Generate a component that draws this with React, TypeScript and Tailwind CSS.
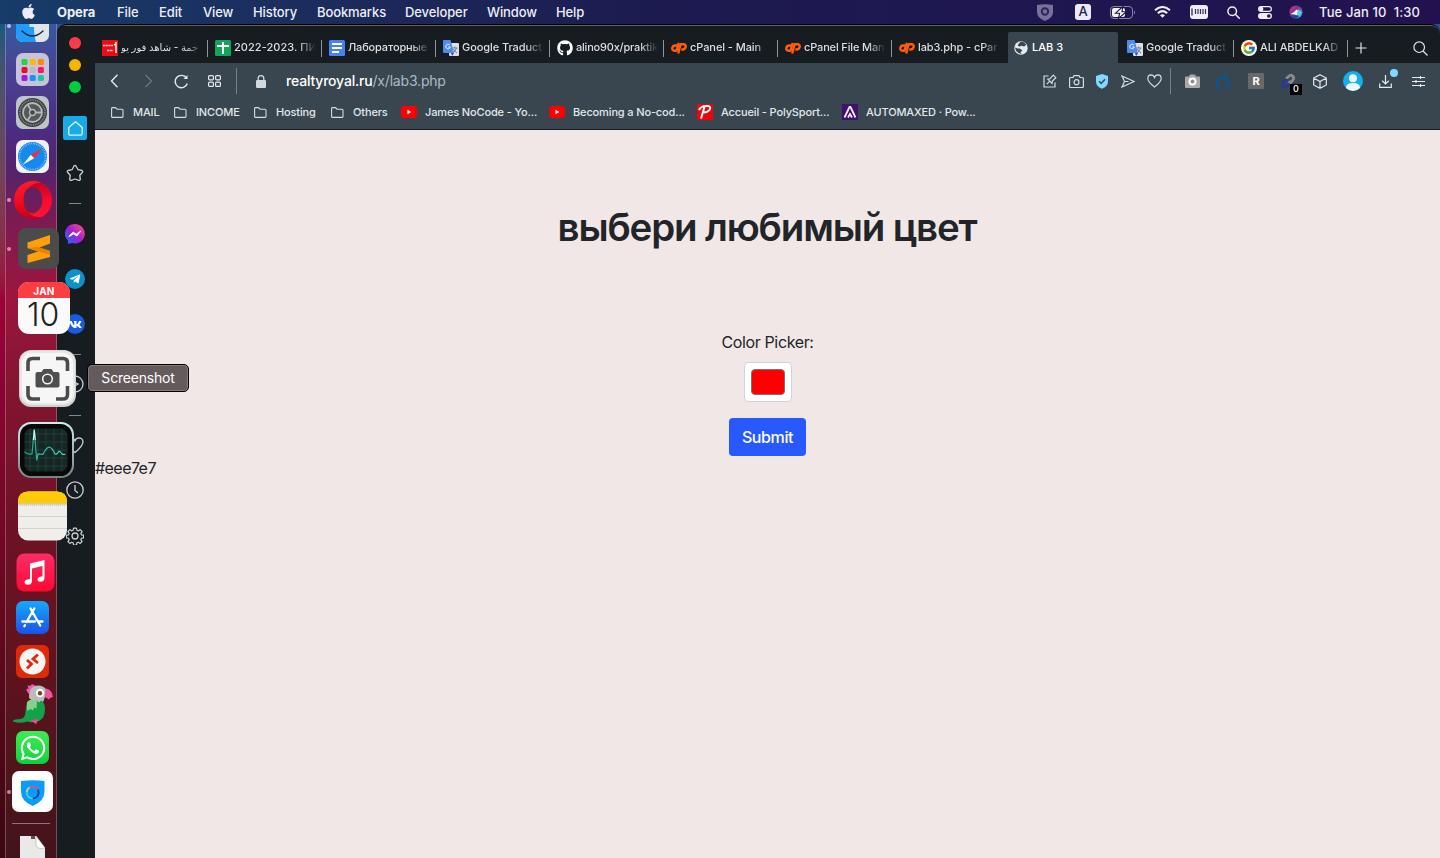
import React from "react";
import { FaApple, FaGithub, FaWhatsapp, FaTelegramPlane, FaVk } from "react-icons/fa";
import { FcGoogle } from "react-icons/fc";

const menus = [
  { label: "File", w: "w-[42px]" },
  { label: "Edit", w: "w-[44px]" },
  { label: "View", w: "w-[50px]" },
  { label: "History", w: "w-[64px]" },
  { label: "Bookmarks", w: "w-[88px]" },
  { label: "Developer", w: "w-[82px]" },
  { label: "Window", w: "w-[69px]" },
  { label: "Help", w: "w-[40px]" },
];

function MenuBar() {
  return (
    <div className="flex h-6 shrink-0 items-center bg-linear-to-r from-[#173c69] via-[#1c1b50] via-45% to-[#21124f] text-[13px] font-medium text-[#edeef5]">
      <FaApple className="mb-px ml-5 mr-[20px] size-[17px] shrink-0" />
      <span className="w-[60px] pt-[2px] font-bold tracking-[-0.05px]">Opera</span>
      {menus.map((m) => (
        <span key={m.label} className={`${m.w} shrink-0 pt-[2px] tracking-[-0.1px]`}>{m.label}</span>
      ))}
      <div className="ml-auto flex items-center">
        <span className="flex w-[38px] justify-center">
          <svg width="16" height="17" viewBox="0 0 16 17"><path d="M0 1Q8-.6 16 1v7q0 6-8 9-8-3-8-9z" fill="#77719c" /><circle cx="8" cy="7.500" r="3.200" fill="none" stroke="#30245d" strokeWidth="2" /></svg>
        </span>
        <span className="flex w-[38px] justify-center">
          <span className="flex size-4 items-center justify-center rounded-[3px] bg-[#eceaf3] text-[13px] font-medium text-[#2b2053]">A</span>
        </span>
        <span className="flex w-[41px] justify-center">
          <svg width="26" height="13" viewBox="0 0 26 13"><rect x=".5" y=".5" width="22" height="12" rx="3.500" fill="none" stroke="#8b85aa" /><path d="M24 4.500q2 2 0 4z" fill="#8b85aa" /><rect x="2" y="2" width="13" height="9" rx="2" fill="#f4f3f8" /><path d="M13 .5L5.500 7.200h4.200L8.300 12.500l8.200-6.700h-4.600z" fill="#fff" stroke="#21124f" strokeWidth="1.100" /></svg>
        </span>
        <span className="flex w-[38px] justify-center">
          <svg width="17" height="12" viewBox="0 0 17 12" fill="none" stroke="#f0eff6" strokeWidth="2"><path d="M1 4.300q7.500-6.600 15 0M3.800 7.200q4.700-4.200 9.400 0" /><path d="M8.500 11.800L6 9.300q2.500-2 5 0z" fill="#f0eff6" stroke="none" /></svg>
        </span>
        <span className="flex w-[36px] justify-center">
          <svg width="18" height="14" viewBox="0 0 18 14"><rect width="18" height="14" rx="3" fill="#f0eff6" /><path d="M2 3.500v7" stroke="#21124f" strokeWidth="1.200" /><path d="M5.500 4v5M8 4v5M10.500 4v5M13 4v5M15.500 4v5" stroke="#3a2e66" strokeWidth="1.200" /></svg>
        </span>
        <span className="flex w-[32px] justify-center">
          <svg width="13" height="13" viewBox="0 0 13 13" fill="none" stroke="#f0eff6" strokeWidth="1.500"><circle cx="5.200" cy="5.200" r="4.300" /><path d="M8.300 8.300l4 4" strokeLinecap="round" /></svg>
        </span>
        <span className="flex w-[32px] justify-center">
          <svg width="14" height="13" viewBox="0 0 14 13"><rect x=".6" y=".6" width="12.800" height="4.800" rx="2.400" fill="none" stroke="#f0eff6" strokeWidth="1.200" /><circle cx="3.200" cy="3" r="2.200" fill="#f0eff6" /><rect y="7" width="14" height="6" rx="3" fill="#f0eff6" /><circle cx="10.800" cy="10" r="1.800" fill="#21124f" /></svg>
        </span>
        <span className="flex w-[38px] justify-center pr-2">
          <svg width="14" height="14" viewBox="0 0 14 14"><defs><linearGradient id="siri" x1="0" y1="0" x2="1" y2="1"><stop offset="0" stopColor="#e0308e" /><stop offset=".4" stopColor="#8a2f96" /><stop offset="1" stopColor="#21a5e8" /></linearGradient></defs><circle cx="7" cy="7" r="6.600" fill="url(#siri)" /><path d="M1.500 9Q5 8 7.500 4.500 9 5 9.500 7L8 10.500 5.500 9.500z" fill="#f2fbff" /><path d="M9 4l4 3-2.500 5L8 9.500z" fill="#4ed3e0" /><path d="M2 10.500l4-.5 4 1-3 2.500q-3-.3-5-3z" fill="#27408f" /></svg>
        </span>
        <span className="w-[121px] whitespace-pre pt-[1px] tracking-[0.12px]">Tue Jan 10  1:30</span>
      </div>
    </div>
  );
}

function Translate() {
  return (
    <svg width="16" height="16" viewBox="0 0 16 16"><rect x="6" y="3" width="10" height="13" rx="1" fill="#dcdfe3" /><path d="M9 8h5.500M11.700 6.500V8M13.500 8q-1 3-3.500 5M10.500 9q1 2.500 3.500 4" stroke="#6a7f92" fill="none" /><path d="M8 13h3l-1.800 3z" fill="#3b3fc4" /><path d="M1 0h6.500L11 13H1q-1 0-1-1V1q0-1 1-1z" fill="#4e8af3" /><path d="M6.800 5a2.300 2.300 0 1 0 .5 2H5.200" fill="none" stroke="#eef" strokeWidth="1" /></svg>
  );
}

const CP = () => (
  <svg width="16" height="12" viewBox="0 0 16 12" fill="none" stroke="#ff5d0a" strokeWidth="2.400">
    <path d="M6.500 3.500H4.200Q1.800 3.500 1.300 6 1 8.700 3.600 8.700H5.500L7.800.8" strokeLinejoin="round" />
    <path d="M7.200 11.500L9.600 2.200h2.900q2.500.2 2.200 2.600-.5 2.700-3.200 2.700H10.300" strokeLinejoin="round" />
  </svg>
);

type TabInfo = { label: string; icon: React.ReactNode; rtl?: boolean; track?: string };
const tabsLeft: TabInfo[] = [
  { label: "جمة - شاهد فور يو", rtl: true, track: "text-[10px] leading-[16px] pb-px", icon: <svg width="16" height="16" viewBox="0 0 16 16"><rect width="16" height="16" fill="#ee0a17" /><path d="M1 5.500h10M5 10.500h6" stroke="#ffc9c9" strokeWidth="1.600" strokeDasharray="2.300 .4" /><path d="M14 4v9M12 5l2-1" stroke="#fff" strokeWidth="1.500" /><circle cx="14" cy="3" r="1.200" fill="#ffd83a" /></svg> },
  { label: "2022-2023. ПИ", icon: <svg width="16" height="16" viewBox="0 0 16 16"><rect width="16" height="16" rx="1.500" fill="#10a558" /><path d="M2 6h12M8 2v12" stroke="#fff" strokeWidth="2" /></svg>, track: "tracking-[0.05px]" },
  { label: "Лабораторные", track: "tracking-[-0.15px]", icon: <svg width="16" height="16" viewBox="0 0 16 16"><rect width="16" height="16" rx="1.500" fill="#4a80f5" /><path d="M3 4h10M3 8h10M3 12h7" stroke="#fff" strokeWidth="2" /></svg> },
  { label: "Google Traduct", icon: <Translate /> },
  { label: "alino90x/praktik", track: "tracking-[-0.2px]", icon: <FaGithub className="size-4 text-white" /> },
  { label: "cPanel - Main", icon: <CP /> },
  { label: "cPanel File Man", track: "tracking-[-0.15px]", icon: <CP /> },
  { label: "lab3.php - cPar", track: "tracking-[-0.1px]", icon: <CP /> },
];
const tabsRight: TabInfo[] = [
  { label: "Google Traduct", icon: <Translate /> },
  { label: "ALI ABDELKAD", icon: <span className="flex size-4 items-center justify-center rounded-full bg-white"><FcGoogle className="size-[14px]" /></span> },
];

function Tab({ t, sep = true }: { t: TabInfo; sep?: boolean }) {
  return (
    <div className="flex w-[114px] shrink-0 items-center">
      <span className="w-4 shrink-0">{t.icon}</span>
      <div className="mb-[2px] ml-[3px] flex w-[82px] shrink-0 mask-r-from-78% mask-r-to-100%">
        <span dir={t.rtl ? "rtl" : "ltr"} className={`shrink-0 whitespace-nowrap ${t.track ?? "tracking-[-0.08px]"}`}>{t.label}</span>
      </div>
      {sep && <span className="ml-[5px] h-[17px] w-px shrink-0 bg-[#8c969f]" />}
    </div>
  );
}

function TabBar() {
  return (
    <div className="flex h-[37px] shrink-0 items-center pl-[7px] text-[11px] font-medium text-[#dcdee0]">
      <div className="flex h-full shrink-0 items-center pt-[7px]">
        {tabsLeft.map((t, i) => (
          <div key={i} className={i === 0 ? "-mr-px flex w-[114px] [&>div>span:last-child]:ml-[4px]" : "flex"}>
            <Tab t={t} sep={i < 7} />
          </div>
        ))}
      </div>
      <div className="-ml-[5px] flex h-[31px] w-[110px] shrink-0 items-center gap-[4px] self-end rounded-t-[2px] bg-[#394650] pl-[6px] text-white">
        <svg width="14" height="14" viewBox="0 0 15 15"><circle cx="7.500" cy="7.500" r="7.200" fill="#e6e9ec" /><path d="M7 1Q11 0 13 4l-2 2-3-1-2 1-2-1 1-2zM1 7l3 1 2 0 3 2-2 2 1 2Q2 13 1 7z" fill="#394650" /></svg>
        <span>LAB 3</span>
      </div>
      <div className="ml-[9px] flex items-center pt-[7px]">
        {tabsRight.map((t, i) => <Tab key={i} t={t} />)}
      </div>
      <svg className="mt-[7px] shrink-0" width="12" height="12" viewBox="0 0 12 12"><path d="M6 .5v11M.5 6h11" stroke="#e0e3e5" strokeWidth="1.200" /></svg>
      <svg className="ml-auto mr-[12px] mt-[7px]" width="15" height="15" viewBox="0 0 15 15" fill="none" stroke="#dfe2e4" strokeWidth="1.200"><circle cx="6.200" cy="6.200" r="5.300" /><path d="M10 10l4.500 4.500" /></svg>
    </div>
  );
}

function Ic({ w, children }: { w: string; children: React.ReactNode }) {
  return <span className={`relative flex ${w} shrink-0 items-center justify-center`}>{children}</span>;
}

const line = { fill: "none", stroke: "#d5dbe0", strokeWidth: 1.2 } as const;

function Toolbar() {
  return (
    <div className="flex h-[36px] shrink-0 items-center bg-[#394650] pl-[3px]">
      <Ic w="w-[33px]"><svg width="9" height="14" viewBox="0 0 9 14" {...line} strokeWidth={1.400} stroke="#e5e9ec"><path d="M7.500 .8L1.500 7l6 6.200" /></svg></Ic>
      <Ic w="w-[34px]"><svg width="9" height="14" viewBox="0 0 9 14" {...line} stroke="#6f7b85"><path d="M1.500 .8l6 6.200-6 6.200" /></svg></Ic>
      <Ic w="w-[33px]"><svg width="15" height="15" viewBox="0 0 15 15" {...line} strokeWidth={1.400} stroke="#e5e9ec"><path d="M13.300 9.500A6.200 6.200 0 1 1 12.500 4" /><path d="M13.500 1v4h-4z" fill="#e5e9ec" stroke="none" /></svg></Ic>
      <Ic w="w-[33px]"><svg width="13" height="12" viewBox="0 0 13 12" {...line} stroke="#e5e9ec"><rect x=".6" y=".6" width="4.800" height="4.200" rx="1" /><rect x="7.600" y=".6" width="4.800" height="4.200" rx="1" /><rect x=".6" y="7.200" width="4.800" height="4.200" rx="1" /><rect x="7.600" y="7.200" width="4.800" height="4.200" rx="1" /></svg></Ic>
      <span className="ml-[5px] h-[26px] w-px bg-[#75818a]" />
      <svg className="ml-[19px]" width="10" height="13" viewBox="0 0 10 13"><rect y="5" width="10" height="8" rx="1.200" fill="#d2d9df" /><path d="M2.200 6V3.500a2.800 2.800 0 0 1 5.600 0V6" fill="none" stroke="#d2d9df" strokeWidth="1.300" /></svg>
      <span className="mb-px ml-5 text-[14px] font-medium tracking-[-0.19px] text-white">realtyroyal.ru<span className="font-normal text-[#adb9c3]">/x/lab3.php</span></span>
      <div className="ml-auto flex items-center pr-[5px]">
        <Ic w="w-[26px]"><svg width="14" height="14" viewBox="0 0 14 14" {...line}><path d="M5.500 2H1v11h11V8.500" /><path d="M3.800 10.200l3-3M4.800 5.200l4.200 4.200.2-2.200 3.600-3.500-2.500-2.500L6.800 4.900z" /></svg></Ic>
        <Ic w="w-[26px]"><svg width="15" height="13" viewBox="0 0 15 13" {...line}><path d="M.6 3.500q0-1 1-1h2.400l1-1.800h5l1 1.800h2.400q1 0 1 1v8q0 1-1 1H1.600q-1 0-1-1z" /><circle cx="7.500" cy="7.200" r="2.500" /></svg></Ic>
        <Ic w="w-[26px]"><svg width="12" height="15" viewBox="0 0 12 15"><path d="M6 0l6 2v5.500q0 5-6 7.300-6-2.300-6-7.300V2z" fill="#82d8ff" /><path d="M3.200 7.200l2 2.200L9 5.300" fill="none" stroke="#344552" strokeWidth="1.500" /></svg></Ic>
        <Ic w="w-[26px]"><svg width="14" height="13" viewBox="0 0 14 13" {...line}><path d="M1 1l12 5.500L1 12l2.500-5.500zM3.500 6.500h4" /></svg></Ic>
        <Ic w="w-[26px]"><svg width="15" height="14" viewBox="0 0 15 14" {...line}><path d="M7.500 13Q1 8 .8 4.500.8 1 4 .9q2.600 0 3.500 2.600Q8.400.9 11 .9q3.200.1 3.200 3.600Q14 8 7.500 13z" /></svg></Ic>
        <span className="ml-[3px] mr-[5px] h-[26px] w-px bg-[#75818a]" />
        <Ic w="w-[32px]"><svg width="15" height="14" viewBox="0 0 15 14"><path d="M0 3.500q0-1 1-1h3L5 .5h5l1 2h3q1 0 1 1V13q0 1-1 1H1q-1 0-1-1z" fill="#a9a9a9" /><circle cx="7.500" cy="7.500" r="3" fill="#8f8f8f" stroke="#fff" strokeWidth="2" /></svg></Ic>
        <Ic w="w-[32px]"><svg width="16" height="16" viewBox="0 0 16 16"><path d="M2.200 6.500A6.300 6.300 0 1 0 8.500 4" fill="none" stroke="#0b548f" strokeWidth="2.200" /><path d="M9.500 .5v7L4.500 4z" fill="#0b548f" /><path d="M0 5h5v2H0z" fill="#0b548f" /></svg></Ic>
        <Ic w="w-[32px]"><span className="flex size-4 items-center justify-center rounded-[1px] bg-[#696969] text-[11px] font-bold text-white">R</span></Ic>
        <Ic w="w-[32px]">
          <svg width="14" height="15" viewBox="0 0 14 15" fill="none" strokeWidth="2.800"><path d="M5 5l3-3q2-1.500 4 .3 1.500 2-.3 4L9.500 8.500 7 7.500" stroke="#8a8b8d" /><path d="M8.500 9.500L6 12.500q-2 1.500-4-.3-1.500-2 .3-4L5 6l2.500 1" stroke="#2b3794" /></svg>
          <span className="absolute left-[18px] top-[10px] flex h-[11px] w-[12px] items-center justify-center bg-black text-[9px] font-medium text-white">0</span>
        </Ic>
        <Ic w="w-[32px]"><svg width="14" height="15" viewBox="0 0 14 15" {...line} stroke="#e5e9ec"><path d="M7 .7l6.300 3.300v7L7 14.300.7 11V4zM.7 4L7 7.500 13.300 4M7 7.500v6.800" /></svg></Ic>
        <Ic w="w-[33px]"><svg width="20" height="20" viewBox="0 0 20 20"><circle cx="10" cy="10" r="10" fill="#13b1ec" /><circle cx="10" cy="7.300" r="4" fill="#eef6ff" /><path d="M3 17q0-5 7-5t7 5q-3 3-7 3t-7-3z" fill="#eef6ff" /></svg></Ic>
        <Ic w="w-[33px]">
          <svg width="13" height="13" viewBox="0 0 13 13" {...line} stroke="#e5e9ec"><path d="M.7 8.500v3.800h11.600V8.500M6.500 0v9M3.200 5.800L6.500 9l3.300-3.200" /></svg>
          <span className="absolute -top-[6px] left-[21px] size-2 rounded-full bg-[#82d8ff]" />
        </Ic>
        <Ic w="w-[33px]"><svg width="13" height="11" viewBox="0 0 13 11" {...line} stroke="#e5e9ec"><path d="M0 1.500h13M0 5.500h13M0 9.500h13M8.500 0v3M4 4v3M8.500 8v3" /></svg></Ic>
      </div>
    </div>
  );
}

const Folder = () => <svg width="13" height="11" viewBox="0 0 13 11" {...line} strokeWidth={1.100}><path d="M.6 9.400V1.500q0-.9.9-.9h3l1.500 1.600h5q1 0 1 1v6.200q0 1-1 1H1.600q-1 0-1-1z" /></svg>;
const Yt = () => <svg width="16" height="12" viewBox="0 0 16 12"><rect width="16" height="12" rx="3" fill="#f00" /><path d="M6.500 3.800v4.400L10.300 6z" fill="#fff" /></svg>;

const bookmarks = [
  { label: "MAIL", w: "w-[63px]", g: "w-[22px]", icon: <Folder /> },
  { label: "INCOME", w: "w-[80px]", g: "w-[22px]", icon: <Folder /> },
  { label: "Hosting", w: "w-[77px]", g: "w-[22px]", icon: <Folder /> },
  { label: "Others", w: "w-[70px]", g: "w-[22px]", icon: <Folder /> },
  { label: "James NoCode - Yo...", w: "w-[148px]", g: "w-[24px]", icon: <Yt /> },
  { label: "Becoming a No-cod...", w: "w-[148px]", g: "w-[24px]", icon: <Yt /> },
  { label: "Accueil - PolySport...", w: "w-[145px]", g: "w-[24px]", icon: <svg width="16" height="16" viewBox="0 0 16 16"><rect width="16" height="16" fill="#e8050b" /><path d="M2 6q2-4.500 9-4 3.500.5 1.500 4-2 2.500-5.500 2.500M7.500 3L4 14.500" fill="none" stroke="#fff" strokeWidth="2" /></svg> },
  { label: "AUTOMAXED · Pow...", w: "w-[150px]", g: "w-[24px]", icon: <svg width="16" height="16" viewBox="0 0 16 16"><rect width="16" height="16" fill="#42116d" /><path d="M2.500 13.500L7.500 3h1l5 10.500M6 13.500l2-3.500 2 3.500" fill="none" stroke="#f3ecf8" strokeWidth="1.800" /></svg> },
];

function Bookmarks() {
  return (
    <div className="flex h-[31px] shrink-0 items-center border-b border-[#161c20] bg-[#394650] pb-[4px] pl-4 text-[11px] font-medium text-[#e1e6ea]">
      {bookmarks.map((b) => (
        <div key={b.label} className={`flex ${b.w} shrink-0 items-center whitespace-nowrap`}>
          <span className={`${b.g} shrink-0`}>{b.icon}</span>
          <span className="pt-px tracking-[-0.14px]">{b.label}</span>
        </div>
      ))}
    </div>
  );
}

const Dash = ({ mt }: { mt: string }) => <span className={`${mt} h-px w-3 shrink-0 bg-[#7c8a93]`} />;
const sideLine = { fill: "none", stroke: "#c8cfd4", strokeWidth: 1.3 } as const;

function Sidebar() {
  return (
    <div className="flex w-[38px] shrink-0 flex-col items-center bg-[#171c20] pl-0 pr-[2px] [&>*]:shrink-0">
      <span className="mt-[11px] size-3 rounded-full bg-[#fb3b47]" />
      <span className="mt-[10px] size-3 rounded-full bg-[#f7b500]" />
      <span className="mt-[10px] size-3 rounded-full bg-[#00cc3d]" />
      <span className="mt-[23px] flex size-6 items-center justify-center rounded-[2px] bg-[#18aae6]">
        <svg width="15" height="15" viewBox="0 0 15 15" fill="none" stroke="#dff4ff" strokeWidth="1.300"><path d="M.8 6.500L7.500.8l6.700 5.700v6.200q0 1.500-1.500 1.500H2.300q-1.500 0-1.500-1.500z" strokeLinejoin="round" /></svg>
      </span>
      <svg className="mt-[24px]" width="18" height="18" viewBox="0 0 18 18" {...sideLine} strokeLinejoin="round"><path d="M8 2q1-1.300 2 0l2 3.700 4 .8q1.200.5.500 1.700l-2.700 3 .5 4.200q-.2 1.300-1.500.9L9 15l-3.800 1.300q-1.300.4-1.500-.9l.5-4.200-2.700-3Q.8 7 2 6.500l4-.8z" /></svg>
      <Dash mt="mt-[21px]" />
      <svg className="mt-5" width="20" height="20" viewBox="0 0 20 20"><defs><linearGradient id="msg" x1="0" y1="1" x2="1" y2="0"><stop offset="0" stopColor="#0876f5" /><stop offset=".5" stopColor="#a91cd8" /><stop offset="1" stopColor="#ff5a6a" /></linearGradient></defs><path d="M10 0a10 9.700 0 1 1-3 19L3 20l-.2-3.500A9.700 9.700 0 0 1 10 0z" fill="url(#msg)" /><path d="M4 12.500L8.200 8l3 2.200L16 7l-4.200 5-3-2.200z" fill="#fff" stroke="#fff" /></svg>
      <span className="mt-[25px] flex size-5 items-center justify-center rounded-full bg-[#0c91cc]"><FaTelegramPlane className="mr-px size-[12px] text-white" /></span>
      <span className="mt-[25px] flex size-5 items-center justify-center rounded-full bg-[#1b5be0]"><FaVk className="size-[13px] text-white" /></span>
      <Dash mt="mt-5" />
      <svg className="mt-5" width="18" height="18" viewBox="0 0 18 18" {...sideLine}><circle cx="9" cy="9" r="8" /><path d="M7 6l5 3-5 3z" /></svg>
      <Dash mt="mt-[22px]" />
      <svg className="mt-5" width="18" height="18" viewBox="0 0 18 18" {...sideLine}><path d="M9 16.500Q1 10 1 5.500 1.500 2 5 1.800q3 0 4 3 1-3 4-3 3.500.2 4 3.700Q17 10 9 16.500z" /></svg>
      <svg className="mt-[27px]" width="18" height="18" viewBox="0 0 18 18" {...sideLine}><circle cx="9" cy="9" r="8.200" /><path d="M9 4v5.500l3 2.500" /></svg>
      <svg className="mt-[28px]" width="18" height="18" viewBox="0 0 24 24" fill="none" stroke="#c8cfd4" strokeWidth="1.700"><path d="M10 1.200h4l.6 3 2 .9 2.600-1.800 2.600 2.700-1.700 2.500.8 2 3 .6v3.600l-3 .6-.8 2 1.700 2.600-2.600 2.600-2.600-1.700-2 .8-.6 3.100h-4l-.6-3.100-2-.8-2.600 1.700-2.600-2.600 1.700-2.600-.8-2-3-.6v-3.600l3-.6.8-2L2.200 6l2.600-2.700 2.600 1.800 2-.9z" strokeLinejoin="round" transform="translate(.5 .3) scale(.96)" /><circle cx="12" cy="12" r="4" /></svg>
    </div>
  );
}

function Page() {
  return (
    <main className="flex min-h-0 flex-1 flex-col items-center bg-[#f0e7e6] text-[#212529]">
      <h1 className="mt-[73px] pr-px text-[38.5px] font-semibold leading-[48px] tracking-[-1.15px]">выбери любимый цвет</h1>
      <label className="mt-[79px] text-[16px] leading-6 tracking-[-0.36px]">Color Picker:</label>
      <div className="mt-[8px] flex h-10 w-12 items-center justify-center rounded-[4px] border border-[#ced4da] bg-white">
        <div className="h-[26px] w-[34px] rounded-[4px] border border-[#767676] bg-[#ff0000]" />
      </div>
      <button className="mt-4 h-[38px] w-[77px] rounded-[4px] bg-[#2759ff] text-[16px] font-medium tracking-[-0.4px] text-white">Submit</button>
      <p className="self-start text-[16px] leading-6 tracking-[-0.55px]">#eee7e7</p>
    </main>
  );
}

const tile = "shrink-0";

function Dock() {
  return (
    <aside className="relative z-10 flex w-[57px] shrink-0 bg-linear-to-b from-[#19597a] via-[#9c0038] via-33% to-[#3c0710]">
      <div className="ml-[5px] flex w-[52px] shrink-0 flex-col items-start border-x border-white/25 bg-[linear-gradient(to_bottom,#36599d_0,#4a4192_50px,#4a2d83_105px,#58226a_150px,#7e1b50_200px,#9b163f_270px,#81152f_370px,#6d1226_500px,#651320_600px,#43141a_834px)]">
        <svg className={`${tile} ml-[10px]`} width="33" height="18" viewBox="0 15 33 18"><defs><clipPath id="fc"><rect width="33" height="33" rx="7" /></clipPath></defs><g clipPath="url(#fc)"><rect width="33" height="33" fill="#dfe5ec" /><path d="M0 0h18q-5 8-4.500 18H18q0 9 2 15H0z" fill="#1f9bfa" /></g><path d="M6 22q10.500 10 21 0" fill="none" stroke="#1b2a41" strokeWidth="1.400" strokeLinecap="round" /></svg>
        <svg className={`${tile} ml-[10px] mt-[11px]`} width="33" height="33" viewBox="0 0 33 33"><rect width="33" height="33" rx="7" fill="#c7c3d8" />
          {["#1fd64a", "#ffb800", "#ff8a00", "#f00a28", "#b9bcc4", "#ff1266", "#a01bdd", "#1592ff", "#12c9a4"].map((c, i) => <rect key={i} x={5.5 + (i % 3) * 8.2} y={6 + Math.floor(i / 3) * 8} width="6" height="6" rx="1.500" fill={c} />)}</svg>
        <svg className={`${tile} ml-[10px] mt-[10px]`} width="33" height="33" viewBox="0 0 33 33"><rect width="33" height="33" rx="7" fill="#bfc4c5" /><circle cx="16.500" cy="16.500" r="14.500" fill="#3d4143" /><circle cx="16.500" cy="16.500" r="12.500" fill="none" stroke="#85898b" strokeWidth="1.600" strokeDasharray="1 .8" /><circle cx="16.500" cy="16.500" r="9.500" fill="#55595b" stroke="#b5b7b8" strokeWidth="1.800" /><g stroke="#b5b7b8" strokeWidth="1.800"><path d="M16.500 16.500h9.500M16.500 16.500l-5-8M16.500 16.500l-5 8" /></g><circle cx="16.500" cy="16.500" r="3" fill="#44484b" stroke="#b5b7b8" strokeWidth="1.300" /></svg>
        <svg className={`${tile} ml-[10px] mt-[11px]`} width="33" height="33" viewBox="0 0 33 33"><rect width="33" height="33" rx="7" fill="#f2f2f3" /><circle cx="16.500" cy="16.500" r="14.500" fill="#1789ee" /><circle cx="16.500" cy="16.500" r="13" fill="none" stroke="#b5deff" strokeWidth="1.500" strokeDasharray=".6 1.100" /><path d="M26.500 8.500L14.800 14.800l3.400 3.400z" fill="#f52c35" /><path d="M6.500 25l8.300-10.200 3.400 3.400z" fill="#f5f5f5" /></svg>
        <svg className={`${tile} ml-[8px] mt-[8px]`} width="38" height="38" viewBox="0 0 38 38"><defs><linearGradient id="op" x1="0" y1="0" x2="0" y2="1"><stop offset="0" stopColor="#ff1b2d" /><stop offset=".6" stopColor="#ef0a1c" /><stop offset="1" stopColor="#c20017" /></linearGradient><linearGradient id="or" x1="0" y1="0" x2="0" y2="1"><stop offset="0" stopColor="#c4001c" /><stop offset=".5" stopColor="#f50c2f" /><stop offset="1" stopColor="#ff1634" /></linearGradient></defs><path fillRule="evenodd" fill="url(#op)" d="M19 0a19 19 0 1 1 0 38 19 19 0 0 1 0-38zM19 5.500c-6 0-9.500 5.500-9.500 13.500S13 32.500 19 32.500 28.500 27 28.500 19 25 5.500 19 5.500z" /><path d="M14 6.800Q21 .5 28 2.300 37.500 8 38 19 37.500 30 28 35.700 21 37.500 14 31.200q6 3 10.500-2 4-4.200 4-10.200T24.500 8.800Q20 3.800 14 6.800z" fill="url(#or)" /></svg>
        <svg className={`${tile} ml-[12px] mt-[9px]`} width="41" height="41" viewBox="0 0 41 41"><rect width="41" height="41" rx="8" fill="#4b4b4b" /><path d="M9.500 14.500L32 7v8.500l-10.500 4L32 23v6L9.500 35v-8L20 23.500 9.500 20z" fill="#ff9f0a" /><path d="M9.500 20l22.500 7-.2-4L20 19z" fill="#e88500" /></svg>
        <div className="ml-[12px] mt-[13px] flex h-[52px] w-[52px] shrink-0 flex-col items-center overflow-hidden rounded-[11px] bg-[#fafafa]">
          <div className="flex h-4 w-full shrink-0 items-center justify-center bg-[#fc3d42] pt-px text-[10px] font-bold leading-none tracking-[0.2px] text-white">JAN</div>
          <div className="pr-[2px] text-[32px] font-light leading-[34px] tracking-[-0.3px] text-[#222]">10</div>
        </div>
        <svg className={`${tile} ml-[13px] mt-[16px]`} width="57" height="57" viewBox="0 0 57 57"><rect width="57" height="57" rx="12" fill="#cfcfcf" /><rect x="1" y=".5" width="55" height="54.500" rx="12" fill="#e7e7e7" /><rect x="3" y="3" width="51" height="50" rx="10" fill="#f6f6f6" /><path d="M9 21v-8q0-4.500 4.500-4.500h7.500M37 8.500h7q4.500 0 4.500 4.500v8M48.500 36v8.500q0 4.500-4.500 4.500h-7M21 49h-7.500q-4.500 0-4.500-4.500V36" fill="none" stroke="#4b4b4d" strokeWidth="3.600" /><path d="M16.500 24q0-2 2-2h4l2-3h8l2 3h4q2 0 2 2v11.500q0 2-2 2h-20q-2 0-2-2z" fill="#4f4f51" /><circle cx="28.500" cy="29" r="4.800" fill="#4a4a4c" stroke="#f4f4f4" strokeWidth="1.600" /></svg>
        <svg className={`${tile} ml-[12px] mt-[15px]`} width="56" height="56" viewBox="0 0 56 56"><defs><linearGradient id="am" x1="0" y1="0" x2="0" y2="1"><stop offset="0" stopColor="#cfeeee" /><stop offset="1" stopColor="#7b7f80" /></linearGradient><linearGradient id="ln"><stop offset="0" stopColor="#2a9d87" /><stop offset="1" stopColor="#3fe0c0" /></linearGradient></defs><rect width="56" height="56" rx="13" fill="url(#am)" /><rect x="2" y="2" width="52" height="52" rx="11.500" fill="#070909" /><rect x="6.500" y="6.500" width="43" height="43" rx="7" fill="#152624" /><path d="M6.500 12h43M6.500 20h43M6.500 28h43M6.500 36h43M6.500 44h43M12 6.500v43M20 6.500v43M28 6.500v43M36 6.500v43M44 6.500v43" stroke="#2f4a46" strokeWidth=".6" /><path d="M6.500 29.500q2 3 7.500 2.500l2.300-25L18.700 38.500l1.300-6.500 5 .3q3.500-7 6.300-7.300 2.700.5 5.700 7 2 1 4-3 1.500.5 3.300 3.300h3" fill="none" stroke="url(#ln)" strokeWidth="1.200" /><path d="M15.300 18l1-10 1 10" fill="none" stroke="#bcf6e8" strokeWidth="1.200" /></svg>
        <svg className={`${tile} ml-[12px] mt-[13px]`} width="49" height="50" viewBox="0 0 49 50"><rect y=".5" width="49" height="49" rx="10" fill="#f0eeea" /><path d="M0 12.500v-2Q0 .5 10 .5h29q10 0 10 10v2z" fill="#ffcb05" /><path d="M0 13h49" stroke="#b9b5a8" strokeWidth="1" /><path d="M2 14.500h45" stroke="#c5c2ba" strokeWidth=".8" strokeDasharray="1 1" /><path d="M0 25.500h49M0 37.500h49" stroke="#d6d3cd" /></svg>
        <svg className={`${tile} ml-[10px] mt-[12px]`} width="39" height="39" viewBox="0 0 39 39"><defs><linearGradient id="mu" x1="0" y1="0" x2="0" y2="1"><stop offset="0" stopColor="#fb2d68" /><stop offset="1" stopColor="#ff0832" /></linearGradient></defs><rect x=".5" y=".5" width="38" height="38" rx="8" fill="url(#mu)" /><path d="M14 10.500L28.500 7v18q0 3.500-4 3.800-3-.2-3-2.600 0-2.500 5-3V13l-10.500 2.500V28q0 3.500-4 3.800-3.300 0-3.500-2.500 0-2.800 5.500-3.300z" fill="#fff" /></svg>
        <svg className={`${tile} ml-[10px] mt-[9px]`} width="33" height="33" viewBox="0 0 33 33"><defs><linearGradient id="as" x1="0" y1="0" x2="0" y2="1"><stop offset="0" stopColor="#14a9fb" /><stop offset="1" stopColor="#1c52e8" /></linearGradient></defs><rect width="33" height="33" rx="7" fill="url(#as)" /><g stroke="#fff" strokeWidth="2.300" strokeLinecap="round"><path d="M18.300 7.500L10.500 21M14.500 7.500l9.700 17M9 24.200l-.6 1M6.300 20.500H19M23.500 20.500h3" /></g></svg>
        <svg className={`${tile} ml-[10px] mt-[11px]`} width="33" height="33" viewBox="0 0 33 33"><rect width="33" height="33" rx="6" fill="#df2a09" /><circle cx="16.500" cy="16.500" r="13" fill="#f8f5f4" /><path d="M11 15l4.500 4-4.500 4.500M22 9.500L17 14l5 4" fill="none" stroke="#df2a09" strokeWidth="2.800" /></svg>
        <svg className={`${tile} ml-[6px] mt-[6px]`} width="42" height="41" viewBox="0 0 42 41"><path d="M1 37.500q0-2.500 5-2.300 6 0 7-4.200Q14 18 20 15l9 1q4 3 4 9 0 9-6 12-7 2-12 .5-6 2.500-14 0z" fill="#13a14a" /><path d="M17 10q-3-3-2.500-5l2-.5-1-3 3 .3L20 0l4 2-3 8z" fill="#ef5aa5" /><path d="M17 14q-.5-12 9-12.500 6 0 8.500 4.500L33 13q-1 3-2 5l-2-1.500-2 2-2.500-2-2.500 2-2-2z" fill="#b9bbbd" /><path d="M33.500 4.500q6.500.5 7.500 8.500-3 0-4 2.500L33 13z" fill="#f0559f" /><circle cx="28" cy="9" r="4.200" fill="#fff" /><circle cx="28" cy="9.200" r="2.200" fill="#6b4a22" /><path d="M15 18q4-4 10-.5l-.5 7-2.500-1-1 3-2.500-1.500L15.500 27q-1.500-4-.5-9z" fill="#83d28c" /><path d="M18 36.500l7-1.500 1 1.500-2 3.500-3-2z" fill="#ef4b96" /></svg>
        <span className={`${tile} ml-[10px] mt-[6px] flex size-[33px] items-center justify-center rounded-[7px] bg-linear-to-b from-[#3bec54] to-[#05d33a]`}><FaWhatsapp className="size-[28px] text-white" /></span>
        <svg className={`${tile} ml-[6px] mt-[7px]`} width="41" height="41" viewBox="0 0 41 41"><rect width="41" height="41" rx="7" fill="#fff" /><path d="M9 10q11.500-1.500 23.500 0v11q0 9-11.700 14Q9 30 9 21z" fill="#0c9bf8" /><g fill="none" strokeWidth="1.500"><path d="M14.700 21.500a6 6 0 0 1 3-5.200" stroke="#cfe16a" /><path d="M17.700 16.300a6 6 0 0 1 8 2" stroke="#f84a62" /><path d="M25.700 18.300a6 6 0 0 1-5 9.200" stroke="#1c3f97" /><path d="M20.700 27.500a6 6 0 0 1-6-6" stroke="#3fe4d2" /></g></svg>
        <span className="ml-[6px] mt-[11px] h-px w-[38px] shrink-0 bg-white/40" />
        <svg className={`${tile} ml-[13px] mt-[11px]`} width="27" height="23" viewBox="0 0 27 23"><path d="M1 1h16l9 12v10H1z" fill="#e9e9e9" /><path d="M17 1l9 12q-8 2-9-3z" fill="#fff" stroke="#b6b6b6" strokeWidth=".7" /><path d="M12 1h4v3h-4z" fill="#555" /></svg>
      </div>
      <span className="absolute left-[7px] top-0 size-1 rounded-full bg-[#b0c3e8]" />
      <span className="absolute left-[7px] top-[174px] size-1 rounded-full bg-[#e48ac0]" />
      <span className="absolute left-[7px] top-[223px] size-1 rounded-full bg-[#e484a8]" />
      <span className="absolute left-[7px] top-[766px] size-1 rounded-full bg-[#cd8289]" />
      <div className="absolute left-[87px] top-[340px] flex h-[28px] w-[102px] items-center justify-center rounded-[5px] border border-black bg-[#655b5c] pb-px text-[14px] tracking-[-0.2px] text-white inset-ring inset-ring-white/20">Screenshot</div>
    </aside>
  );
}

export default function App() {
  return (
    <div className="flex h-[858px] w-[1440px] flex-col overflow-hidden font-['Inter','DejaVu_Sans',sans-serif]">
      <MenuBar />
      <div className="flex min-h-0 flex-1 bg-[#2d4f8c]">
        <Dock />
        <div className="flex min-w-0 flex-1 flex-col overflow-hidden rounded-t-[9px] border-t border-black bg-[#171c20]">
          <div className="flex min-h-0 flex-1 rounded-t-[9px] border-t border-[#5c6164]">
            <Sidebar />
            <div className="flex min-w-0 flex-1 flex-col">
              <TabBar />
              <Toolbar />
              <Bookmarks />
              <Page />
            </div>
          </div>
        </div>
      </div>
    </div>
  );
}
